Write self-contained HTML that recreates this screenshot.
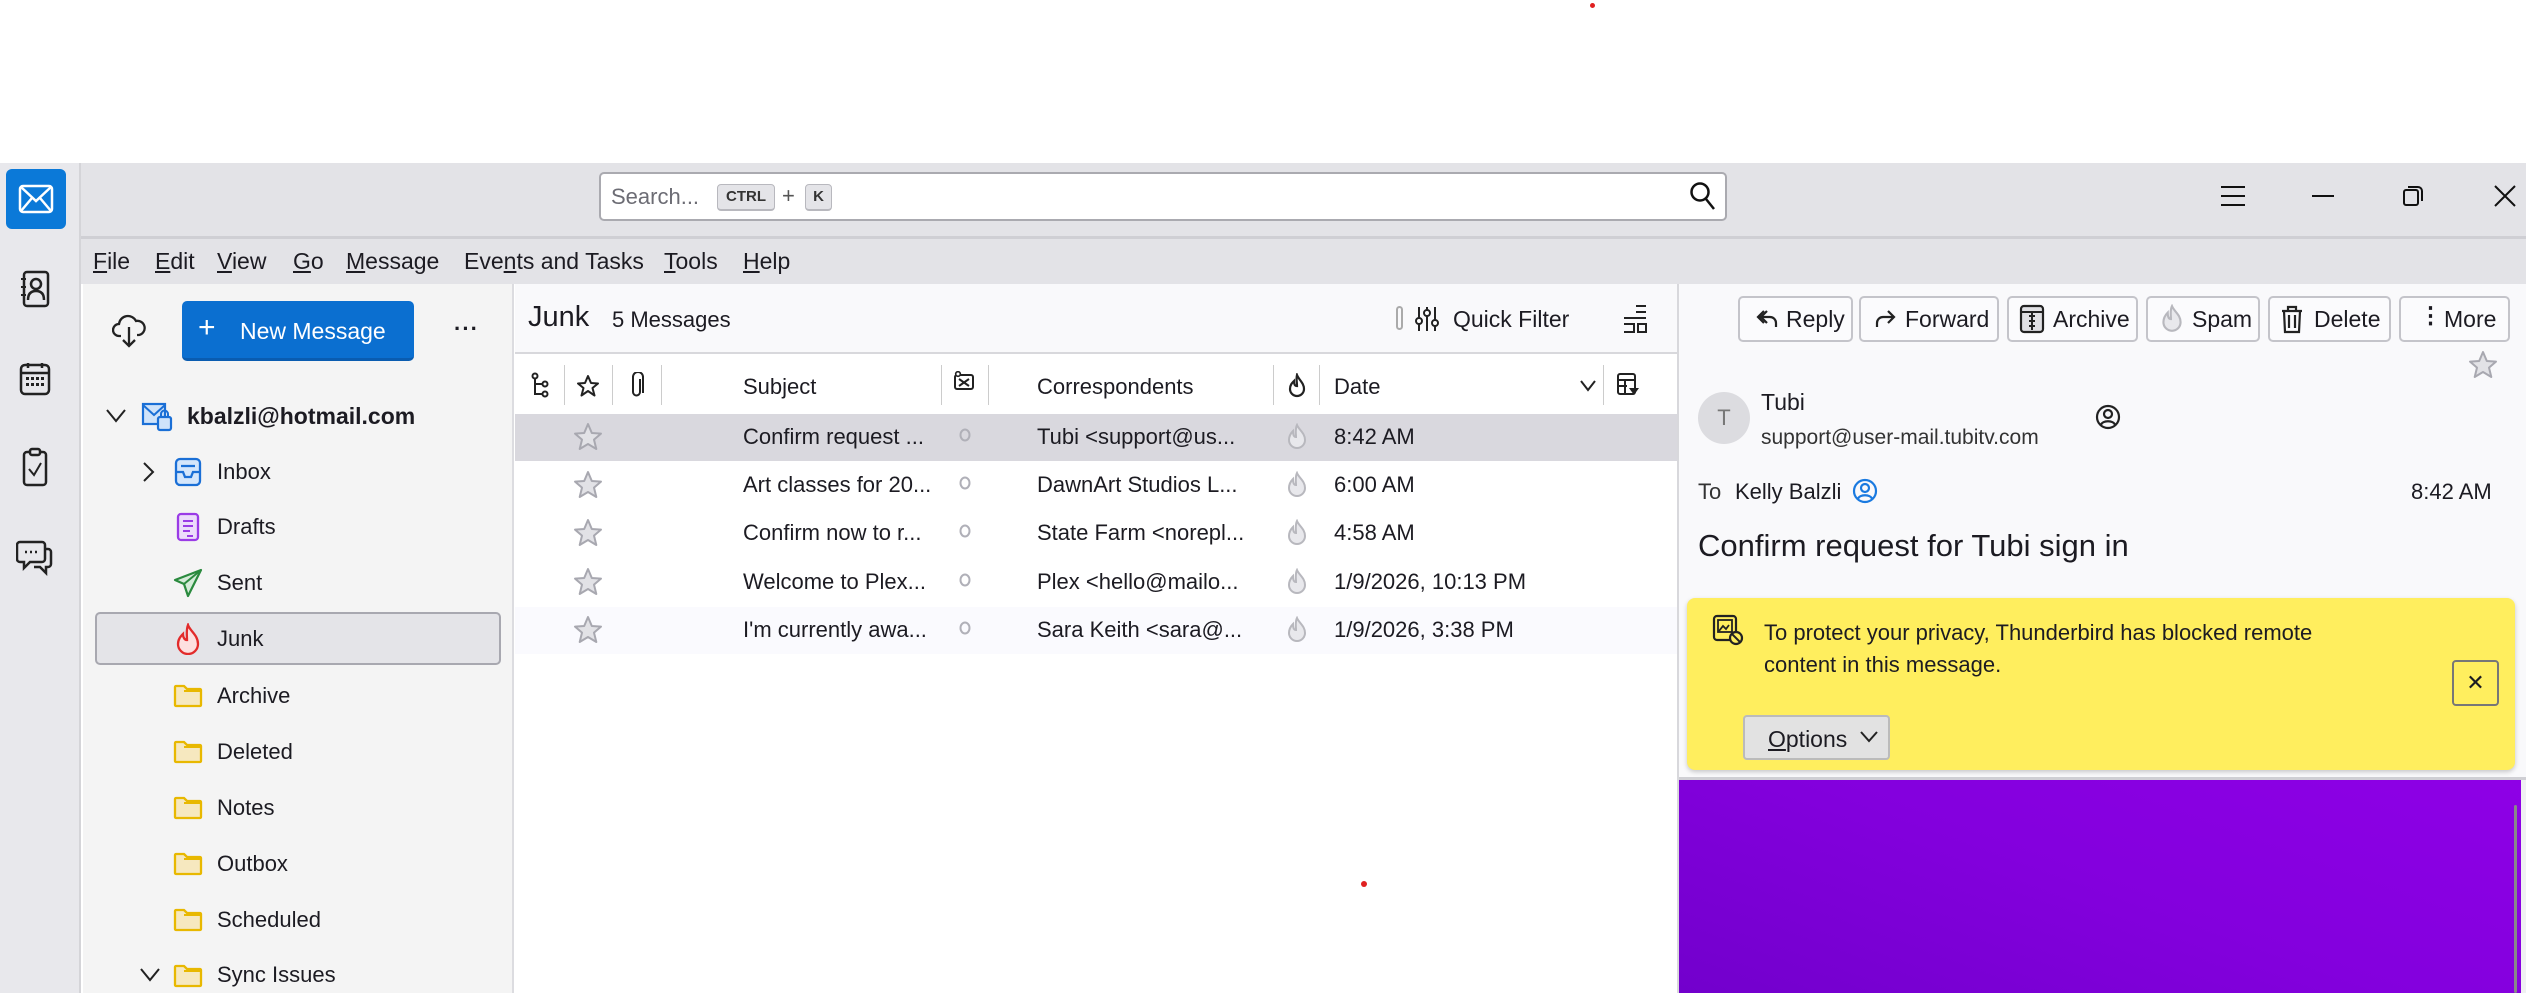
<!DOCTYPE html>
<html><head><meta charset="utf-8"><style>
*{margin:0;padding:0;box-sizing:border-box}
body{width:2526px;height:993px;position:relative;overflow:hidden;background:#fff;font-family:"Liberation Sans",sans-serif;color:#1c1b22;font-size:22px}
.a{position:absolute;white-space:nowrap}
.c{position:absolute;transform:translate(-50%,-50%)}
svg{display:block}
</style></head><body>
<div class="a" style="left:1590px;top:3px;width:5px;height:5px;border-radius:50%;background:#e02020"></div>

<!-- title bar -->
<div class="a" style="left:0;top:163px;width:2526px;height:121px;background:#e3e3e7"></div>
<div class="a" style="left:81px;top:236px;width:2445px;height:3px;background:#cfcfd4"></div>
<!-- spaces bar -->
<div class="a" style="left:0;top:163px;width:81px;height:830px;background:#e8e8ec;border-right:2px solid #d4d4d8"></div>
<div class="a" style="left:6px;top:169px;width:60px;height:60px;border-radius:6px;background:#0b79d8"></div>
<svg class="c" style="left:36px;top:199px" width="36" height="30" viewBox="0 0 36 30"><rect x="2" y="2" width="32" height="26" rx="3" fill="none" stroke="#fff" stroke-width="2.5"/><path d="M3 3 L18 17 L33 3 M3 27 L14 14 M33 27 L22 14" stroke="#fff" stroke-width="2.5" fill="none"/></svg>
<svg class="c" style="left:35px;top:289px" width="30" height="38" viewBox="0 0 30 38"><rect x="4" y="2" width="24" height="34" rx="3" fill="none" stroke="#222" stroke-width="2.5"/><circle cx="16" cy="14" r="5" fill="none" stroke="#222" stroke-width="2.5"/><path d="M8 30 Q8 21 16 21 Q24 21 24 30" fill="none" stroke="#222" stroke-width="2.5"/><path d="M1 9h5M1 17h5M1 25h5" stroke="#222" stroke-width="2"/></svg>
<svg class="c" style="left:35px;top:379px" width="32" height="34" viewBox="0 0 32 34"><rect x="2" y="3" width="28" height="29" rx="4" fill="none" stroke="#222" stroke-width="2.5"/><path d="M2 11h28M9 1v5M23 1v5" stroke="#222" stroke-width="2.5"/><g fill="#222"><rect x="7" y="15" width="3" height="3"/><rect x="12" y="15" width="3" height="3"/><rect x="17" y="15" width="3" height="3"/><rect x="22" y="15" width="3" height="3"/><rect x="7" y="21" width="3" height="3"/><rect x="12" y="21" width="3" height="3"/><rect x="17" y="21" width="3" height="3"/><rect x="22" y="21" width="3" height="3"/></g></svg>
<svg class="c" style="left:35px;top:467px" width="28" height="40" viewBox="0 0 28 40"><rect x="3" y="5" width="22" height="33" rx="3" fill="none" stroke="#222" stroke-width="2.5"/><rect x="9" y="2" width="10" height="6" rx="2" fill="#e8e8ec" stroke="#222" stroke-width="2.5"/><path d="M8 22 L13 28 L20 16" fill="none" stroke="#222" stroke-width="2"/></svg>
<svg class="c" style="left:35px;top:557px" width="38" height="38" viewBox="0 0 38 38"><path d="M4 4h22a3 3 0 0 1 3 3v14a3 3 0 0 1-3 3H14l-6 6v-6H4a3 3 0 0 1-3-3V7a3 3 0 0 1 3-3z" fill="none" stroke="#222" stroke-width="2.5"/><path d="M29 11h3a3 3 0 0 1 3 3v12a3 3 0 0 1-3 3h-2v6l-6-6h-6" fill="none" stroke="#222" stroke-width="2.5"/><path d="M9 14h2M14 14h2M19 14h2" stroke="#222" stroke-width="2.5"/></svg>

<!-- search -->
<div class="a" style="left:599px;top:172px;width:1128px;height:49px;background:#fff;border:2px solid #aaaab0;border-radius:5px"></div>
<div class="a" style="left:611px;top:184px;color:#6c6c74;font-size:22px">Search...</div>
<div class="a" style="left:717px;top:184px;width:58px;height:27px;background:#e4e4e8;border:1px solid #b8b8be;border-bottom-width:2px;border-radius:4px;font-size:15px;font-weight:bold;text-align:center;line-height:24px;color:#333">CTRL</div>
<div class="a" style="left:782px;top:183px;color:#555">+</div>
<div class="a" style="left:805px;top:184px;width:27px;height:27px;background:#e4e4e8;border:1px solid #b8b8be;border-bottom-width:2px;border-radius:4px;font-size:15px;font-weight:bold;text-align:center;line-height:24px;color:#333">K</div>
<svg class="c" style="left:1703px;top:196px" width="28" height="30" viewBox="0 0 28 30"><circle cx="11" cy="11" r="8.5" fill="none" stroke="#111" stroke-width="2.5"/><path d="M17 18 L25 28" stroke="#111" stroke-width="2.5"/></svg>
<!-- window controls -->
<svg class="c" style="left:2233px;top:196px" width="26" height="22"><path d="M1 2h24M1 11h24M1 20h24" stroke="#111" stroke-width="2"/></svg>
<svg class="c" style="left:2323px;top:196px" width="22" height="4"><path d="M0 2h22" stroke="#111" stroke-width="2"/></svg>
<svg class="c" style="left:2413px;top:196px" width="22" height="22"><rect x="2" y="5" width="14" height="15" rx="2" fill="none" stroke="#111" stroke-width="2"/><path d="M6 2h10a4 4 0 0 1 4 4v10" fill="none" stroke="#111" stroke-width="2"/></svg>
<svg class="c" style="left:2505px;top:196px" width="22" height="22"><path d="M1 1L21 21M21 1L1 21" stroke="#111" stroke-width="2"/></svg>

<!-- menu -->
<div class="a" style="top:248px;left:93px;font-size:23px"><u>F</u>ile</div>
<div class="a" style="top:248px;left:155px;font-size:23px"><u>E</u>dit</div>
<div class="a" style="top:248px;left:217px;font-size:23px"><u>V</u>iew</div>
<div class="a" style="top:248px;left:293px;font-size:23px"><u>G</u>o</div>
<div class="a" style="top:248px;left:346px;font-size:23px"><u>M</u>essage</div>
<div class="a" style="top:248px;left:464px;font-size:23px">Eve<u>n</u>ts and Tasks</div>
<div class="a" style="top:248px;left:664px;font-size:23px"><u>T</u>ools</div>
<div class="a" style="top:248px;left:743px;font-size:23px"><u>H</u>elp</div>

<!-- folder pane -->
<div class="a" style="left:83px;top:284px;width:431px;height:709px;background:#f4f4f4;border-right:2px solid #dcdce0"></div>
<svg class="c" style="left:129px;top:331px" width="34" height="38" viewBox="0 0 34 38"><path d="M9 24H7a6 6 0 0 1 0-12 9 9 0 0 1 17-3 7 7 0 0 1 3 14h-2" fill="none" stroke="#222" stroke-width="2.3"/><path d="M17 15v19M11 28l6 6 6-6" fill="none" stroke="#222" stroke-width="2.3"/></svg>
<div class="a" style="left:182px;top:301px;width:232px;height:60px;background:#0b6fd0;border-radius:5px;border-bottom:3px solid #0a5cb0"></div>
<div class="a" style="left:198px;top:311px;color:#fff;font-size:30px;line-height:34px">+</div>
<div class="a" style="left:240px;top:318px;color:#fff;font-size:23px">New Message</div>
<div class="a" style="left:454px;top:316px;font-size:22px;font-weight:bold;letter-spacing:1px">···</div>

<svg class="c" style="left:116px;top:416px" width="20" height="14"><path d="M1 1l9 11 9-11" fill="none" stroke="#222" stroke-width="2"/></svg>
<svg class="c" style="left:157px;top:416px" width="32" height="32" viewBox="0 0 32 32"><rect x="2" y="4" width="22" height="20" fill="#cfe3fa" stroke="#1a6fd6" stroke-width="2.2"/><path d="M2 5l11 10 11-10" fill="none" stroke="#1a6fd6" stroke-width="2"/><rect x="17" y="17" width="13" height="13" rx="2" fill="#cfe3fa" stroke="#1a6fd6" stroke-width="2.2"/><path d="M20 17v-3a3.5 3.5 0 0 1 7 0v3" fill="none" stroke="#1a6fd6" stroke-width="2"/></svg>
<div class="a" style="left:187px;top:403px;font-weight:bold;font-size:23px">kbalzli@hotmail.com</div>

<svg class="c" style="left:149px;top:472px" width="12" height="20"><path d="M1 1l9 9-9 9" fill="none" stroke="#222" stroke-width="2"/></svg>
<svg class="c" style="left:188px;top:472px" width="28" height="30" viewBox="0 0 28 30"><rect x="2" y="2" width="24" height="26" rx="4" fill="#d4e6fb" stroke="#1a6fd6" stroke-width="2.3"/><path d="M2 15h7l2 5h6l2-5h7M7 9h14" fill="none" stroke="#1a6fd6" stroke-width="2.3"/></svg>
<div class="a" style="left:217px;top:459px">Inbox</div>
<svg class="c" style="left:188px;top:527px" width="24" height="30" viewBox="0 0 24 30"><rect x="2" y="2" width="20" height="26" rx="3" fill="#ecdcfb" stroke="#9a3be6" stroke-width="2.3"/><path d="M7 9h10M7 14h10M7 19h7M11 24h6" stroke="#9a3be6" stroke-width="2"/></svg>
<div class="a" style="left:217px;top:514px">Drafts</div>
<svg class="c" style="left:188px;top:583px" width="30" height="30" viewBox="0 0 30 30"><path d="M28 2L2 12l9 4 4 12z" fill="#d5ecd9" stroke="#2a8a3e" stroke-width="2.2" stroke-linejoin="round"/><path d="M11 16L28 2" stroke="#2a8a3e" stroke-width="2"/></svg>
<div class="a" style="left:217px;top:570px">Sent</div>
<div class="a" style="left:95px;top:612px;width:406px;height:53px;background:#e4e4e8;border:2px solid #a8a8b0;border-radius:5px"></div>
<svg class="c" style="left:188px;top:639px" width="24" height="32" viewBox="0 0 24 32"><path d="M12 2c2 6 10 10 10 19a10 10 0 0 1-20 0c0-5 3-8 5-10 0 4 2 6 4 6 0-5-1-10 1-15z" fill="#fde0e0" stroke="#e22b2b" stroke-width="2.3"/></svg>
<div class="a" style="left:217px;top:626px">Junk</div>
<!-- yellow folders -->
<svg width="0" height="0" style="position:absolute"><defs><symbol id="fd" viewBox="0 0 30 24"><path d="M2 3a1 1 0 0 1 1-1h8l3 3h13a1 1 0 0 1 1 1v15a1 1 0 0 1-1 1H3a1 1 0 0 1-1-1z" fill="#f6e8bf" stroke="#e8b800" stroke-width="2.3"/><path d="M11 7h17" stroke="#e8b800" stroke-width="2"/></symbol></defs></svg>
<svg class="c" style="left:188px;top:696px" width="30" height="24"><use href="#fd"/></svg>
<div class="a" style="left:217px;top:683px">Archive</div>
<svg class="c" style="left:188px;top:752px" width="30" height="24"><use href="#fd"/></svg>
<div class="a" style="left:217px;top:739px">Deleted</div>
<svg class="c" style="left:188px;top:808px" width="30" height="24"><use href="#fd"/></svg>
<div class="a" style="left:217px;top:795px">Notes</div>
<svg class="c" style="left:188px;top:864px" width="30" height="24"><use href="#fd"/></svg>
<div class="a" style="left:217px;top:851px">Outbox</div>
<svg class="c" style="left:188px;top:920px" width="30" height="24"><use href="#fd"/></svg>
<div class="a" style="left:217px;top:907px">Scheduled</div>
<svg class="c" style="left:150px;top:975px" width="20" height="14"><path d="M1 1l9 11 9-11" fill="none" stroke="#222" stroke-width="2"/></svg>
<svg class="c" style="left:188px;top:976px" width="30" height="24"><use href="#fd"/></svg>
<div class="a" style="left:217px;top:962px">Sync Issues</div>

<!-- thread pane -->
<div class="a" style="left:515px;top:284px;width:1162px;height:709px;background:#fff"></div>
<div class="a" style="left:515px;top:284px;width:1162px;height:70px;background:#f9f9fb;border-bottom:2px solid #d8d8dc"></div>
<div class="a" style="left:528px;top:301px;font-size:29px">Junk</div>
<div class="a" style="left:612px;top:307px;font-size:22px">5 Messages</div>
<div class="a" style="left:1396px;top:306px;width:7px;height:24px;border:2px solid #aaa;border-radius:4px"></div>
<svg class="c" style="left:1427px;top:319px" width="24" height="26" viewBox="0 0 24 26"><path d="M4 1v24M12 1v24M20 1v24" stroke="#222" stroke-width="2"/><circle cx="4" cy="15" r="3" fill="#fff" stroke="#222" stroke-width="2"/><circle cx="12" cy="7" r="3" fill="#fff" stroke="#222" stroke-width="2"/><circle cx="20" cy="17" r="3" fill="#fff" stroke="#222" stroke-width="2"/></svg>
<div class="a" style="left:1453px;top:306px;font-size:23px">Quick Filter</div>
<svg class="c" style="left:1635px;top:319px" width="26" height="30" viewBox="0 0 26 30"><path d="M14 2h10M14 8h10M2 14h22M2 20h10v8H2M16 20h8v8h-8z" fill="none" stroke="#222" stroke-width="2"/></svg>

<!-- column header -->
<div class="a" style="left:515px;top:356px;width:1162px;height:58px;background:#fff"></div>
<div class="a" style="left:564px;top:365px;width:1px;height:40px;background:#ccc"></div>
<div class="a" style="left:612px;top:365px;width:1px;height:40px;background:#ccc"></div>
<div class="a" style="left:661px;top:365px;width:1px;height:40px;background:#ccc"></div>
<div class="a" style="left:941px;top:365px;width:1px;height:40px;background:#ccc"></div>
<div class="a" style="left:988px;top:365px;width:1px;height:40px;background:#ccc"></div>
<div class="a" style="left:1273px;top:365px;width:1px;height:40px;background:#ccc"></div>
<div class="a" style="left:1319px;top:365px;width:1px;height:40px;background:#ccc"></div>
<div class="a" style="left:1603px;top:365px;width:1px;height:40px;background:#ccc"></div>
<svg class="c" style="left:540px;top:386px" width="18" height="28" viewBox="0 0 18 28"><path d="M4 2v20h8M4 12h8" fill="none" stroke="#222" stroke-width="2"/><circle cx="4" cy="4" r="2.5" fill="#fff" stroke="#222" stroke-width="2"/><circle cx="14" cy="12" r="2.5" fill="#fff" stroke="#222" stroke-width="2"/><circle cx="14" cy="22" r="2.5" fill="#fff" stroke="#222" stroke-width="2"/></svg>
<svg class="c" style="left:588px;top:386px" width="24" height="24" viewBox="0 0 24 24"><path d="M12 2l3 7 7 .5-5.5 4.5 2 7.5L12 17l-6.5 4.5 2-7.5L2 9.5 9 9z" fill="none" stroke="#222" stroke-width="2" stroke-linejoin="round"/></svg>
<svg class="c" style="left:637px;top:386px" width="16" height="28" viewBox="0 0 16 28"><path d="M11 7v13a3.5 3.5 0 0 1-7 0V5a5 5 0 0 1 10 0v16" fill="none" stroke="#222" stroke-width="2"/></svg>
<div class="a" style="left:743px;top:374px">Subject</div>
<svg class="c" style="left:964px;top:381px" width="22" height="20" viewBox="0 0 22 20"><rect x="2" y="4" width="18" height="14" rx="2" fill="none" stroke="#222" stroke-width="2"/><path d="M6 8l10 7M16 8L6 15" stroke="#222" stroke-width="2"/><circle cx="5" cy="3" r="2.3" fill="#fff" stroke="#222" stroke-width="1.6"/></svg>
<div class="a" style="left:1037px;top:374px">Correspondents</div>
<svg class="c" style="left:1297px;top:386px" width="18" height="26" viewBox="0 0 18 26"><path d="M9 2c2 5 7 8 7 14a7 7 0 0 1-14 0c0-4 2-6 4-8 0 4 1 5 3 5 0-4-1-7 0-11z" fill="none" stroke="#222" stroke-width="2.2"/></svg>
<div class="a" style="left:1334px;top:374px">Date</div>
<svg class="c" style="left:1588px;top:386px" width="16" height="12"><path d="M1 1l7 9 7-9" fill="none" stroke="#222" stroke-width="2"/></svg>
<svg class="c" style="left:1628px;top:385px" width="24" height="26" viewBox="0 0 24 26"><rect x="2" y="2" width="17" height="20" rx="2" fill="none" stroke="#222" stroke-width="2"/><path d="M2 8h17M2 14h9M9 8v14" stroke="#222" stroke-width="2"/><path d="M13 16h10l-5 7z" fill="#222"/></svg>

<!-- rows -->
<div class="a" style="left:515px;top:414px;width:1162px;height:47px;background:#d9d8de"></div>
<div class="a" style="left:515px;top:607px;width:1162px;height:47px;background:#fafafe"></div>
<svg width="0" height="0" style="position:absolute"><defs>
<symbol id="st" viewBox="0 0 30 30"><path d="M15 2l3.8 9 9.2.6-7 6 2.3 9.4L15 22l-8.3 5 2.3-9.4-7-6 9.2-.6z" fill="#e2e2e6" stroke="#a8a8b0" stroke-width="2" stroke-linejoin="round"/></symbol>
<symbol id="fl" viewBox="0 0 20 28"><path d="M10 2c2 5 8 8 8 15a8 8 0 0 1-16 0c0-4 2-7 4-9 0 4 1 6 3 6 0-4-1-8 1-12z" fill="#e8e8ec" stroke="#b8b8be" stroke-width="2"/></symbol>
</defs></svg>

<svg class="c" style="left:588px;top:437px" width="30" height="30"><use href="#st"/></svg>
<svg class="c" style="left:588px;top:485px" width="30" height="30"><use href="#st"/></svg>
<svg class="c" style="left:588px;top:533px" width="30" height="30"><use href="#st"/></svg>
<svg class="c" style="left:588px;top:582px" width="30" height="30"><use href="#st"/></svg>
<svg class="c" style="left:588px;top:630px" width="30" height="30"><use href="#st"/></svg>
<div class="c" style="left:965px;top:435px;width:11px;height:13px;border:2px solid #b0b0b8;border-radius:50%"></div>
<div class="c" style="left:965px;top:483px;width:11px;height:13px;border:2px solid #b0b0b8;border-radius:50%"></div>
<div class="c" style="left:965px;top:531px;width:11px;height:13px;border:2px solid #b0b0b8;border-radius:50%"></div>
<div class="c" style="left:965px;top:580px;width:11px;height:13px;border:2px solid #b0b0b8;border-radius:50%"></div>
<div class="c" style="left:965px;top:628px;width:11px;height:13px;border:2px solid #b0b0b8;border-radius:50%"></div>
<svg class="c" style="left:1297px;top:437px" width="20" height="28"><use href="#fl"/></svg>
<svg class="c" style="left:1297px;top:485px" width="20" height="28"><use href="#fl"/></svg>
<svg class="c" style="left:1297px;top:533px" width="20" height="28"><use href="#fl"/></svg>
<svg class="c" style="left:1297px;top:582px" width="20" height="28"><use href="#fl"/></svg>
<svg class="c" style="left:1297px;top:630px" width="20" height="28"><use href="#fl"/></svg>

<div class="a" style="left:743px;top:424px">Confirm request ...</div>
<div class="a" style="left:1037px;top:424px">Tubi &lt;support@us...</div>
<div class="a" style="left:1334px;top:424px">8:42 AM</div>
<div class="a" style="left:743px;top:472px">Art classes for 20...</div>
<div class="a" style="left:1037px;top:472px">DawnArt Studios L...</div>
<div class="a" style="left:1334px;top:472px">6:00 AM</div>
<div class="a" style="left:743px;top:520px">Confirm now to r...</div>
<div class="a" style="left:1037px;top:520px">State Farm &lt;norepl...</div>
<div class="a" style="left:1334px;top:520px">4:58 AM</div>
<div class="a" style="left:743px;top:569px">Welcome to Plex...</div>
<div class="a" style="left:1037px;top:569px">Plex &lt;hello@mailo...</div>
<div class="a" style="left:1334px;top:569px">1/9/2026, 10:13 PM</div>
<div class="a" style="left:743px;top:617px">I'm currently awa...</div>
<div class="a" style="left:1037px;top:617px">Sara Keith &lt;sara@...</div>
<div class="a" style="left:1334px;top:617px">1/9/2026, 3:38 PM</div>
<div class="a" style="left:1361px;top:881px;width:6px;height:6px;border-radius:50%;background:#e02020"></div>

<!-- message pane -->
<div class="a" style="left:1677px;top:284px;width:849px;height:709px;background:#f9f9fb;border-left:2px solid #d8d8dc"></div>
<div class="a" style="left:1738px;top:296px;width:115px;height:46px;border:2px solid #c4c4ca;border-radius:5px;background:#fbfbfd"></div>
<div class="a" style="left:1859px;top:296px;width:140px;height:46px;border:2px solid #c4c4ca;border-radius:5px;background:#fbfbfd"></div>
<div class="a" style="left:2007px;top:296px;width:131px;height:46px;border:2px solid #c4c4ca;border-radius:5px;background:#fbfbfd"></div>
<div class="a" style="left:2146px;top:296px;width:114px;height:46px;border:2px solid #c4c4ca;border-radius:5px;background:#fbfbfd"></div>
<div class="a" style="left:2268px;top:296px;width:123px;height:46px;border:2px solid #c4c4ca;border-radius:5px;background:#fbfbfd"></div>
<div class="a" style="left:2399px;top:296px;width:111px;height:46px;border:2px solid #c4c4ca;border-radius:5px;background:#fbfbfd"></div>
<svg class="c" style="left:1767px;top:319px" width="24" height="22" viewBox="0 0 24 22"><path d="M9 3L3 9l6 6M3 9h12a6 6 0 0 1 6 6v4" fill="none" stroke="#222" stroke-width="2.2"/><path d="M12 3L6 9l6 6" fill="none" stroke="#222" stroke-width="2.2"/></svg>
<div class="a" style="left:1786px;top:306px;font-size:23px">Reply</div>
<svg class="c" style="left:1885px;top:319px" width="24" height="22" viewBox="0 0 24 22"><path d="M15 3l6 6-6 6M21 9H10a6 6 0 0 0-6 6v4" fill="none" stroke="#222" stroke-width="2.2"/></svg>
<div class="a" style="left:1905px;top:306px;font-size:23px">Forward</div>
<svg class="c" style="left:2032px;top:319px" width="26" height="30" viewBox="0 0 26 30"><rect x="2" y="2" width="22" height="26" rx="3" fill="#e0e0e4" stroke="#222" stroke-width="2.2"/><path d="M2 8h22M13 8v18M10 12h6M10 17h6M10 22h6" stroke="#222" stroke-width="2"/></svg>
<div class="a" style="left:2053px;top:306px;font-size:23px">Archive</div>
<svg class="c" style="left:2172px;top:319px" width="22" height="30"><use href="#fl"/></svg>
<div class="a" style="left:2192px;top:306px;font-size:23px">Spam</div>
<svg class="c" style="left:2292px;top:319px" width="24" height="30" viewBox="0 0 24 30"><path d="M2 7h20M8 7V3h8v4M4 7l1 21h14l1-21M9 11v13M15 11v13" fill="none" stroke="#222" stroke-width="2.2"/></svg>
<div class="a" style="left:2314px;top:306px;font-size:23px">Delete</div>
<div class="a" style="left:2419px;top:302px;font-size:23px;font-weight:bold">⋮</div>
<div class="a" style="left:2444px;top:306px;font-size:23px">More</div>
<svg class="c" style="left:2483px;top:365px" width="30" height="30"><use href="#st"/></svg>

<div class="c" style="left:1724px;top:418px;width:52px;height:52px;border-radius:50%;background:#dcdce0;color:#777;font-size:22px;text-align:center;line-height:52px">T</div>
<div class="a" style="left:1761px;top:389px;font-size:23px">Tubi</div>
<div class="a" style="left:1761px;top:426px;font-size:21px;color:#333">support@user-mail.tubitv.com</div>
<svg class="c" style="left:2108px;top:417px" width="26" height="26" viewBox="0 0 26 26"><circle cx="13" cy="13" r="11" fill="none" stroke="#222" stroke-width="2.2"/><circle cx="13" cy="10" r="4" fill="none" stroke="#222" stroke-width="2.2"/><path d="M6 21c1-5 13-5 14 0" fill="none" stroke="#222" stroke-width="2.2"/></svg>
<div class="a" style="left:1698px;top:479px;font-size:22px;color:#333">To</div>
<div class="a" style="left:1735px;top:479px;font-size:22px">Kelly Balzli</div>
<svg class="c" style="left:1865px;top:491px" width="26" height="26" viewBox="0 0 26 26"><circle cx="13" cy="13" r="11" fill="none" stroke="#1a7ae0" stroke-width="2.2"/><circle cx="13" cy="10" r="4" fill="none" stroke="#1a7ae0" stroke-width="2.2"/><path d="M6 21c1-5 13-5 14 0" fill="none" stroke="#1a7ae0" stroke-width="2.2"/></svg>
<div class="a" style="left:2411px;top:479px;font-size:22px">8:42 AM</div>
<div class="a" style="left:1698px;top:528px;font-size:31px">Confirm request for Tubi sign in</div>

<div class="a" style="left:1687px;top:598px;width:828px;height:172px;background:#ffee5e;border-radius:8px;box-shadow:0 2px 5px rgba(0,0,0,.2)"></div>
<svg class="c" style="left:1728px;top:630px" width="32" height="32" viewBox="0 0 32 32"><rect x="2" y="2" width="22" height="24" rx="3" fill="none" stroke="#222" stroke-width="2.2"/><rect x="6" y="6" width="14" height="12" fill="none" stroke="#222" stroke-width="1.8"/><path d="M7 17l4-5 3 3 3-4" fill="none" stroke="#222" stroke-width="1.8"/><circle cx="24" cy="24" r="6" fill="#ffee5e" stroke="#222" stroke-width="2.2"/><path d="M20 20l8 8" stroke="#222" stroke-width="2"/></svg>
<div class="a" style="left:1764px;top:617px;font-size:22px;line-height:32px">To protect your privacy, Thunderbird has blocked remote<br>content in this message.</div>
<div class="a" style="left:2452px;top:660px;width:47px;height:46px;border:2px solid #777;border-radius:4px;text-align:center;line-height:42px;font-size:22px">✕</div>
<div class="a" style="left:1743px;top:715px;width:147px;height:45px;background:#e2e2e2;border:2px solid #bbb;border-radius:4px"></div>
<div class="a" style="left:1768px;top:726px;font-size:23px"><u>O</u>ptions</div>
<svg class="c" style="left:1869px;top:737px" width="18" height="12"><path d="M1 1l8 9 8-9" fill="none" stroke="#222" stroke-width="2"/></svg>

<div class="a" style="left:1679px;top:777px;width:847px;height:3px;background:#cfcfd4"></div>
<div class="a" style="left:1679px;top:780px;width:842px;height:213px;background:linear-gradient(20deg,#7200cc 0%,#8300dd 50%,#8e00e6 100%)"></div>
<div class="a" style="left:2514px;top:805px;width:3px;height:188px;background:#888;border-radius:2px"></div>
<div class="a" style="left:2521px;top:780px;width:5px;height:213px;background:#f0f0f2"></div>
</body></html>
